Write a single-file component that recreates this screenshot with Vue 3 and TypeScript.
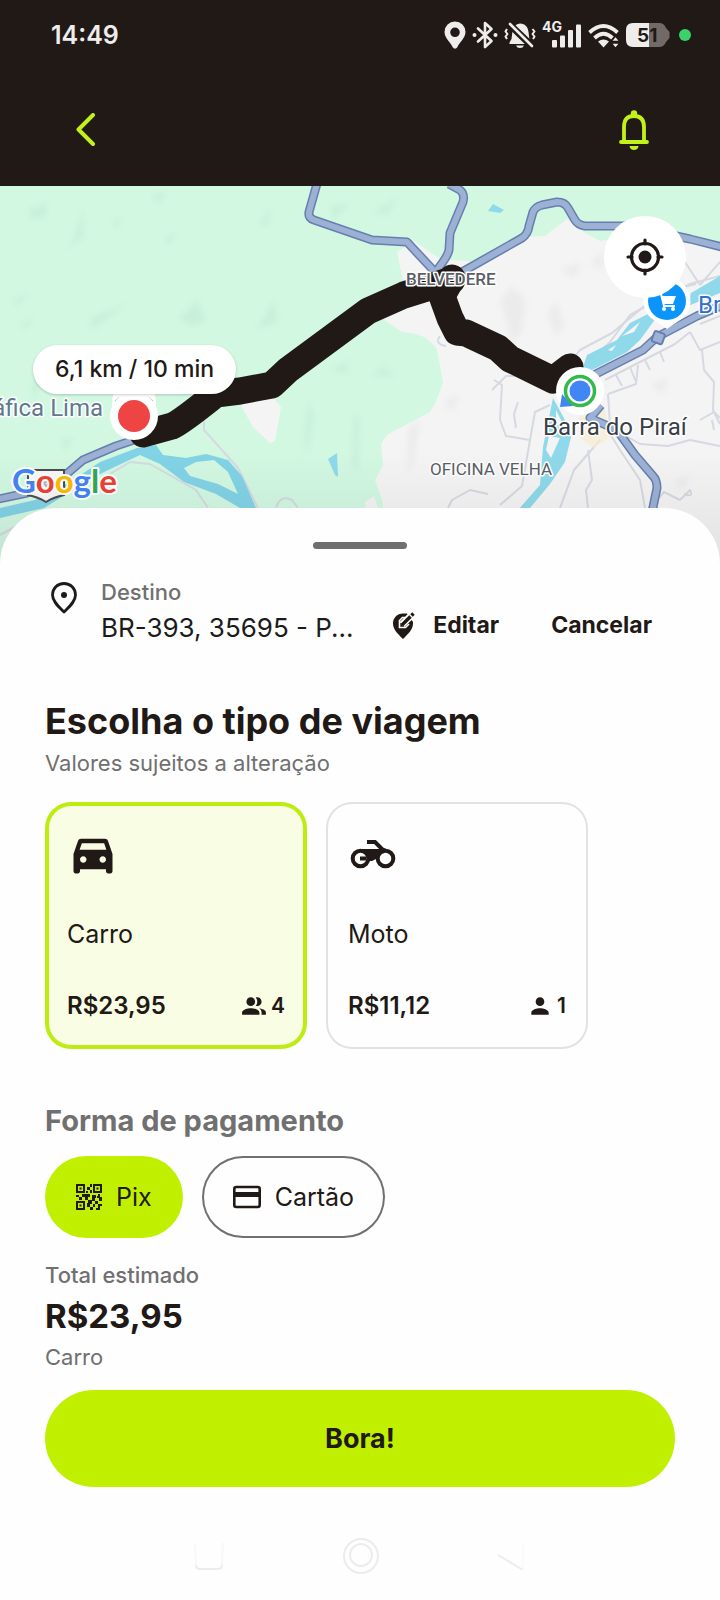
<script setup lang="ts">
import { computed, ref } from 'vue'

interface Ride {
  id: string
  name: string
  price: string
  seats: number
}

const rides: Ride[] = [
  { id: 'carro', name: 'Carro', price: 'R$23,95', seats: 4 },
  { id: 'moto', name: 'Moto', price: 'R$11,12', seats: 1 },
]
const rideId = ref('carro')
const payment = ref('pix')
const selected = computed(() => rides.find((r) => r.id === rideId.value) ?? rides[0])

const majorRoads = [
  'M318 180L309 212Q308 218 314 220L372 240L407 242L435 272',
  'M449 184L460 190Q465 194 463 202L450 233L449 250Q448 256 437 270',
  'M462 272L522 238Q528 234 529 226L533 212Q535 207 542 205L557 202Q565 202 568 208L575 220Q578 225 585 226L630 226L690 239L730 249',
  'M590 377L643 350L657 337L697 316L730 302',
  'M601 405L590 418L617 430L635 455L653 476Q657 480 657 488L652 512L650 570',
  'M140 438L116 446L83 460L63 477L27 493L-6 500',
]

const minorRoads = [
  'M590 360L610 342L630 315L650 304L690 284L720 276',
  'M560 375L580 350L612 333L648 303',
  'M685 262L700 285M700 285L720 262M680 288L696 284',
  'M700 324L720 316M690 332L700 350L720 342M702 350L704 370L714 382L713 410L720 424',
  'M605 380L640 362L675 344L690 332M616 375L622 386M630 367L636 382M645 360L650 370M660 352L664 362',
  'M608 394L636 384L638 365M608 394L610 424L626 436L640 444L668 446L690 440L720 446',
  'M550 405L535 412L530 440L522 486L500 505M530 440L506 436L500 420L502 385L494 380',
  'M518 402L514 414L516 428M492 390L506 376L524 376L540 384',
  'M604 424L620 450L640 480L645 508M600 440L574 470L560 508',
  'M588 450L592 480L586 490L588 508M650 508L664 492L680 500M680 500L690 490Q694 498 684 494',
  'M448 508L452 500L470 490L488 494M440 336Q434 344 446 346',
  'M204 410L204 430L238 468L258 508M276 508Q280 494 292 500L298 508M100 480L130 462L150 464L196 490L208 508M0 535L20 524',
  'M700 420L714 412L720 418M712 420L714 430',
]

const relief = [
  'M28 210L48 202L46 216L32 220Z', 'M84 206L74 238L66 252L84 236Z', 'M152 196L166 190L160 206Z',
  'M112 222L122 216L118 230Z', 'M164 238L178 232L168 246Z', 'M12 300L30 292L18 306Z',
  'M90 318L130 302L116 312L92 330Z', 'M178 318L198 300L206 322L190 326Z', 'M20 325L34 316L26 330Z',
  'M258 225L272 206L268 226Z', 'M256 330L274 300L278 322Z', 'M330 206L350 204L334 220Z',
  'M372 214L398 196L388 214Z', 'M308 400L314 414L308 456L304 440Z', 'M354 412L360 420L358 472L352 466Z',
  'M330 370L350 360L346 374Z', 'M370 376L384 366L396 376Z', 'M60 440L74 436L66 452Z', 'M30 386L40 380L36 400Z',
]
const greyRelief = [
  'M500 300L512 286L526 300L522 330L512 344L506 320Z', 'M548 314L556 300L564 326L556 338Z',
  'M408 430L420 420L414 460L408 476Z', 'M444 402L460 394L452 412Z', 'M560 270L582 262L574 278Z',
  'M650 386L668 376L664 394Z', 'M672 484L690 474L684 488Z', 'M590 262L606 250L602 270Z',
]
</script>

<template>
  <main class="screen">
    <header class="top">
      <div class="status">
        <time class="clock">14:49</time>
        <div class="status-icons">
          <svg width="22" height="28" viewBox="0 0 22 28">
            <path fill="#efedec" fill-rule="evenodd" d="M11 0.500a10.500 10.500 0 0 1 10.500 10.500C21.500 17.500 14.500 22 13.500 26Q11 29.500 8.500 26C7.500 22 .5 17.500 .5 11A10.500 10.500 0 0 1 11 0.500zM11 6.500a4.800 4.800 0 1 0 0 9.600a4.800 4.800 0 0 0 0-9.600z" />
          </svg>
          <svg width="26" height="28" viewBox="0 0 26 28">
            <path fill="none" stroke="#efedec" stroke-width="2.600" stroke-linejoin="round" stroke-linecap="round" d="M6 7.500L19.500 20L13 26V2L19.500 8L6 20.500" />
            <circle cx="2.500" cy="14" r="2" fill="#efedec" /><circle cx="23.500" cy="14" r="2" fill="#efedec" />
          </svg>
          <svg width="32" height="28" viewBox="0 0 32 28">
            <path fill="#efedec" d="M16 2.500C21 2.500 24 6 24.500 11L25.500 19L27 21.500V23H5.500V21.500L7.500 18L8.500 10Q9.500 3.500 16 2.500zM12 24.500h8q-1 2.500-4 2.500t-4-2.500z" />
            <path stroke="#211915" stroke-width="7" d="M3 1L29 26" />
            <path stroke="#efedec" stroke-width="2.600" stroke-linecap="round" d="M6 3L28 25" />
            <path fill="none" stroke="#efedec" stroke-width="2" stroke-linejoin="round" d="M3 8L1.500 10.500L3.500 13L1.500 15.500L3 18M28.500 8L30.500 10.500L28.500 13L30.500 15.500L29 18" />
          </svg>
          <svg width="40" height="36" viewBox="0 -4 40 36">
            <text x="0" y="11" font-family="Inter, sans-serif" font-size="14" font-weight="700" fill="#efedec">4G</text>
            <g fill="#efedec"><rect x="10" y="19" width="5" height="7.500" rx="1" /><rect x="18" y="14.500" width="5" height="12" rx="1" /><rect x="26" y="9" width="5" height="17.500" rx="1" /><rect x="34" y="3.500" width="5" height="23" rx="1" /></g>
          </svg>
          <svg width="32" height="28" viewBox="0 0 32 28">
            <g fill="none" stroke="#efedec" stroke-width="3.800"><path d="M1.500 11.500Q15.500-1.500 29.500 11.500" /><path d="M6.500 17Q15.500 8.500 24.500 17" /></g>
            <path fill="#efedec" d="M10 20.500q5.500-4 11 0l-5.500 6z" />
            <path fill="#efedec" stroke="#211915" stroke-width="1.500" d="M23 20.500l4.500-5.500 4.500 5.500zM23 22l4.500 5.500 4.500-5.500z" />
          </svg>
          <svg width="44" height="24" viewBox="0 0 44 24">
            <path fill="#716a67" d="M7 0H33Q38 0 40 5L43.500 9V15L40 19Q38 24 33 24H7z" />
            <path fill="#efedec" d="M7 0H23V24H7Q0 24 0 17V7Q0 0 7 0z" />
            <text x="11" y="19" font-family="Inter, sans-serif" font-size="19" font-weight="700" fill="#211915">51</text>
          </svg>
          <i class="dot"></i>
        </div>
      </div>
      <nav class="bar">
        <button class="icon-btn" aria-label="Voltar">
          <svg width="20" height="34" viewBox="0 0 20 34"><path fill="none" stroke="#c2f11a" stroke-width="4" stroke-linecap="round" stroke-linejoin="round" d="M17 2L2.500 16.500L17 31" /></svg>
        </button>
        <button class="icon-btn" aria-label="Notificações">
          <svg width="32" height="40" viewBox="0 0 32 40">
            <path fill="none" stroke="#c2f11a" stroke-width="3.800" stroke-linecap="round" stroke-linejoin="round" d="M3 32H29M6 32V17Q6 6 16 6T26 17V32" />
            <path fill="#c2f11a" d="M12.800 6V3.500a3.200 3.200 0 0 1 6.400 0V6zM11.500 36h9q-.5 4-4.500 4t-4.500-4z" />
          </svg>
        </button>
      </nav>
    </header>

    <section class="map" aria-label="Mapa do trajeto">
      <svg class="map-art" viewBox="0 186 720 384">
        <defs>
          <linearGradient id="shade" x1="0" y1="0" x2="0" y2="1"><stop offset="0" stop-color="#000" stop-opacity="0" /><stop offset="1" stop-color="#000" stop-opacity=".08" /></linearGradient>
          <filter id="soft" x="-30%" y="-30%" width="160%" height="160%"><feGaussianBlur stdDeviation="3" /></filter>
        </defs>
        <rect y="185" width="720" height="385" fill="#d2f8e2" />
        <g fill="#c8f0d9" filter="url(#soft)"><path v-for="d in relief" :key="d" :d="d" /></g>
        <path fill="#f4f4f4" d="M397 252L414 241L440 259L480 262L526 237L545 236L567 219L585 233L600 241L630 236L690 240L720 248V570H392L382 500L375 480L383 465L381 445Q384 434 400 428L430 412Q436 404 443 382L437 350Q430 338 416 334L402 332L382 318L404 285Z" />
        <path fill="#f4f4f4" d="M240 404L273 398L281 407L275 441L270 443L253 427ZM365 502L374 496L378 508H366Z" />
        <g fill="#ebebec" filter="url(#soft)"><path v-for="d in greyRelief" :key="d" :d="d" /></g>
        <g fill="none" stroke="#d6d9e1" stroke-width="2" stroke-linejoin="round"><path v-for="d in minorRoads" :key="d" :d="d" /></g>
        <g fill="#8fd9ea">
          <path d="M328 459L337 453L338 477L335 475ZM488 211L493 204L504 210L500 213Z" />
          <path d="M691 293L720 276V293L688 306ZM652 312L630 323L617 340L587 355L580 376L600 366L627 352L640 340L656 318Z" />
          <path d="M553 398L572 433L565 462L550 484L530 508L518 510L540 485L543 447Z" />
        </g>
        <path fill="#f4f4f4" d="M622 336L640 322L634 332ZM608 350L616 345L612 351ZM549 436L560 438L551 458L546 450ZM556 410L562 422L556 426Z" />
        <path fill="#82d3e6" d="M0 508L35 500L70 482L100 462L137 448L156 445L163 455L186 458L206 454L228 460L242 476L256 508H240L216 494L184 482L160 464L140 455L104 472L70 492L44 508L0 518Z" />
        <path fill="#d2f8e2" d="M184 468L196 462L214 460L228 472L238 494L218 484L190 476Z" />
        <path fill="#f6ecd2" opacity=".7" d="M578 418L604 408L612 436L594 448L582 440Z" />
        <g fill="none" stroke="#667fae" stroke-width="9" stroke-linejoin="round"><path v-for="d in majorRoads" :key="d" :d="d" /></g>
        <g fill="none" stroke="#9db1d5" stroke-width="6" stroke-linejoin="round"><path v-for="d in majorRoads" :key="d" :d="d" /></g>
        <rect x="653" y="332" width="11" height="11" rx="2" fill="#9db1d5" stroke="#667fae" stroke-width="2" transform="rotate(20 658 337)" />

        <g fill="none" stroke="#211915" stroke-width="27" stroke-linejoin="round" stroke-linecap="round">
          <path d="M143 434L172 426Q180 423 216 394L240 391L272 385L288 370L368 311L404 295L452 280" />
          <path d="M452 278L442 296L450 318L457 332L466 333L498 348L510 359L553 380L570 367" />
        </g>

        <path fill="#f7f7f7" stroke="#4d4d4d" stroke-width="2" d="M28 470H64V495Q54 497 46 502Q38 497 28 495Z" />
        <path fill="none" stroke="#b5b5b5" stroke-width="2" d="M30 482H62M42 480L46 486L52 480" />

        <circle cx="134" cy="402" r="22" fill="#fff" /><path fill="none" stroke="#7287a0" stroke-width="3" d="M116 402Q122 395 134 395T152 402" />
        <circle cx="134" cy="416" r="24" fill="#fff" /><circle cx="134" cy="416" r="16" fill="#ef4444" />

        <path fill="#fff" d="M667 278A23 23 0 0 1 683 318Q674 324 667 329Q660 324 651 318A23 23 0 0 1 667 278Z" />
        <circle cx="667" cy="301" r="19" fill="#0b95fb" />
        <path fill="none" stroke="#fff" stroke-width="2" d="M657 294H661L664 306H675" /><path fill="#fff" d="M661 296H676L673 304H664Z" /><circle cx="664" cy="309" r="2" fill="#fff" /><circle cx="673" cy="309" r="2" fill="#fff" />

        <circle cx="580" cy="391" r="24" fill="#fff" /><path fill="#4285f4" d="M562 394L560 407L573 406Z" />
        <circle cx="580" cy="391" r="14.500" fill="#fff" stroke="#34b94d" stroke-width="3.500" /><circle cx="580" cy="391" r="10.500" fill="#4285f4" />

        <g class="labels">
          <text x="406" y="285" font-size="17" font-weight="500" fill="#5a5e66">BELVEDERE</text>
          <text x="430" y="475" font-size="17" fill="#5a5e66">OFICINA VELHA</text>
          <text x="543" y="435" font-size="24" fill="#3b3f45">Barra do Piraí</text>
          <text x="103" y="416" font-size="24" text-anchor="end" fill="#62788f">áfica Lima</text>
          <text x="698" y="313" font-size="24" fill="#2f6fd0">Br</text>
          <text class="google" x="12" y="493" font-size="33"><tspan fill="#4285f4">G</tspan><tspan fill="#ea4335">o</tspan><tspan fill="#fbbc05">o</tspan><tspan fill="#4285f4">g</tspan><tspan fill="#34a853">l</tspan><tspan fill="#ea4335">e</tspan></text>
        </g>
        <rect y="450" width="720" height="120" fill="url(#shade)" />
      </svg>
      <output class="eta">6,1 km / 10 min</output>
      <button class="locate" aria-label="Minha localização">
        <svg width="38" height="38" viewBox="0 0 38 38" fill="none" stroke="#211915">
          <circle cx="19" cy="19" r="13.500" stroke-width="3.200" /><circle cx="19" cy="19" r="6.500" fill="#211915" stroke="none" />
          <path stroke-width="3.200" stroke-linecap="round" d="M19 2V6M19 32V36M2 19H6M32 19H36" />
        </svg>
      </button>
    </section>

    <section class="sheet">
      <div class="handle"></div>
      <div class="dest">
        <svg class="pin" width="26" height="32" viewBox="0 0 26 32">
          <path fill="none" stroke="#1b1b1b" stroke-width="2.800" stroke-linejoin="round" d="M13 1.500C19.500 1.500 24.500 6.500 24.500 13C24.500 19.500 18 25 13 30C8 25 1.500 19.500 1.500 13C1.500 6.500 6.500 1.500 13 1.500Z" /><circle cx="13" cy="13" r="3" fill="#1b1b1b" />
        </svg>
        <div class="place">
          <p class="caption strong">Destino</p>
          <p class="address">BR-393, 35695 - P...</p>
        </div>
        <button class="text-btn">
          <svg width="22" height="27" viewBox="0 0 22 27">
            <path fill="#211915" d="M10 1.500C4 1.500 0 6 0 11.500C0 17.500 5 22 10 27C15 22 20 17.500 20 11.500V10L14 1.500Z" />
            <path stroke="#fff" stroke-width="7" d="M9 12.500L22 0" /><path fill="none" stroke="#fff" stroke-width="1.600" d="M13 5.500H9.500L6.500 8.500V15.500H12.500L16 12" />
            <path stroke="#211915" stroke-width="3.500" d="M9 13L17.500 4.500M18.500 3.500L20.500 1.500" />
          </svg>
          Editar
        </button>
        <button class="text-btn cancel">Cancelar</button>
      </div>

      <h1>Escolha o tipo de viagem</h1>
      <p class="caption note">Valores sujeitos a alteração</p>

      <div class="rides" role="radiogroup" aria-label="Tipo de viagem">
        <label v-for="r in rides" :key="r.id" class="ride" :class="{ on: rideId === r.id }">
          <input v-model="rideId" class="hidden" type="radio" name="ride" :value="r.id" />
          <svg v-if="r.id === 'carro'" width="52" height="52" viewBox="0 0 24 24"><path fill="#211915" d="M18.920 6.010C18.720 5.420 18.160 5 17.500 5h-11c-.66 0-1.210.42-1.420 1.010L3 12v8c0 .55.45 1 1 1h1c.55 0 1-.45 1-1v-1h12v1c0 .55.45 1 1 1h1c.55 0 1-.45 1-1v-8l-2.080-5.990zM7.500 16c-.83 0-1.500-.67-1.500-1.500S6.670 13 7.500 13s1.500.67 1.500 1.500S8.330 16 7.500 16zm9 0c-.83 0-1.500-.67-1.500-1.500s.67-1.500 1.500-1.500 1.500.67 1.500 1.500-.67 1.500-1.500 1.500zM5.810 10l1.040-3h10.290l1.040 3H5.810z" /></svg>
          <svg v-else width="52" height="52" viewBox="0 0 52 52">
            <g fill="none" stroke="#211915" stroke-width="4"><circle cx="12.500" cy="30.500" r="7.800" /><circle cx="37.500" cy="30.500" r="7.800" /><path d="M19 14H27L37 24M12 30.500H18" /></g>
            <path fill="#211915" d="M12 21H31L38 20L30 27L28 31L24 33H19Q20 25 12 23Z" />
          </svg>
          <span class="ride-name">{{ r.name }}</span>
          <span class="ride-foot">
            <strong>{{ r.price }}</strong>
            <span class="seats">
              <svg v-if="r.seats > 1" width="26" height="26" viewBox="0 0 24 24" fill="#211915"><circle cx="9" cy="8" r="4" /><path d="M9 14c-2.670 0-8 1.340-8 4v2h16v-2c0-2.660-5.330-4-8-4zM16.670 14.130C18.040 15.060 19 16.320 19 18v2h4v-2c0-2.180-3.570-3.470-6.330-3.870zM15 12c2.210 0 4-1.790 4-4s-1.790-4-4-4c-.47 0-.91.1-1.330.24C14.500 5.270 15 6.580 15 8s-.5 2.730-1.330 3.760c.42.14.86.24 1.330.24z" /></svg>
              <svg v-else width="26" height="26" viewBox="0 0 24 24" fill="#211915"><path d="M12 12c2.210 0 4-1.790 4-4s-1.790-4-4-4-4 1.790-4 4 1.790 4 4 4zm0 2c-2.670 0-8 1.340-8 4v2h16v-2c0-2.660-5.330-4-8-4z" /></svg>
              {{ r.seats }}
            </span>
          </span>
        </label>
      </div>

      <h2>Forma de pagamento</h2>
      <div class="pays" role="radiogroup" aria-label="Forma de pagamento">
        <label class="pay" :class="{ on: payment === 'pix' }">
          <input v-model="payment" class="hidden" type="radio" name="pay" value="pix" />
          <svg width="26" height="26" viewBox="0 0 26 26">
            <g fill="none" stroke="#211915" stroke-width="2"><rect x="1" y="1" width="7" height="7" /><rect x="18" y="1" width="7" height="7" /><rect x="1" y="18" width="7" height="7" /></g>
            <path fill="#211915" d="M3.500 3.500h2v2h-2zM20.500 3.500h2v2h-2zM3.500 20.500h2v2h-2zM14 0h2v3h-2zM11 3h3v3h-3zM14 6h2v3h-2zM10 7h2v2h-2zM0 11h3v2H0zM3 13h3v3H3zM6 10h8v3h-2v3H9v-3H6zM16 11h4v3h-4zM22 10h2v3h2v4h-3v-3h-2v-2h1zM12 16h4v-2h3v3h-3v3h-4zM19 17h3v3h-3zM11 19h3v4h-3zM17 20h2v3h-2zM22 20h4v2h-2v4h-4v-2h2zM14 23h3v3h-3z" />
          </svg>
          Pix
        </label>
        <label class="pay" :class="{ on: payment === 'cartao' }">
          <input v-model="payment" class="hidden" type="radio" name="pay" value="cartao" />
          <svg width="28" height="24" viewBox="0 0 28 24"><rect x="1.300" y="2" width="25.400" height="20" rx="2" fill="none" stroke="#211915" stroke-width="2.600" /><path fill="#211915" d="M1 7h26v5H1z" /></svg>
          Cartão
        </label>
      </div>

      <p class="caption strong total-label">Total estimado</p>
      <p class="total">{{ selected.price }}</p>
      <p class="caption">{{ selected.name }}</p>
      <button class="go">Bora!</button>

      <div class="sysnav" aria-hidden="true">
        <svg width="34" height="38" viewBox="0 0 34 38" fill="none" stroke="#ececec" stroke-width="2"><path stroke="#f8f8f8" d="M3 6L4 29M31 6L30 29" /><path d="M4 28Q4 32 8 32H26Q30 32 30 28" /></svg>
        <svg width="38" height="38" viewBox="0 0 38 38" fill="none" stroke="#ececec" stroke-width="2"><circle cx="19" cy="19" r="17" /><circle cx="19" cy="18" r="11" /></svg>
        <svg width="30" height="38" viewBox="0 0 30 38" fill="none" stroke="#ececec" stroke-width="2"><path d="M2 18L27 33" /><path stroke="#fafafa" d="M27 6V33" /></svg>
      </div>
    </section>
  </main>
</template>

<style>
body { margin: 0; background: #fefefe; }
</style>

<style scoped>
.screen { font-family: Inter, "Open Sans", sans-serif; color: #211915; background: #fefefe; }
.screen * { box-sizing: border-box; }
p, h1, h2 { margin: 0; }
button { border: 0; background: none; padding: 0; font: inherit; color: inherit; cursor: pointer; }
svg { display: block; flex: none; }
.hidden { position: absolute; opacity: 0; width: 1px; height: 1px; margin: 0; }

.top { background: #211915; padding-bottom: 36px; }
.status { display: flex; justify-content: space-between; align-items: center; height: 70px; padding: 0 29px 0 51px; }
.clock { font-size: 25px; font-weight: 600; color: #efedec; }
.status-icons { display: flex; align-items: center; gap: 6px; }
.dot { width: 12px; height: 12px; margin-left: 3px; border-radius: 50%; background: #3bd16b; }
.bar { display: flex; justify-content: space-between; align-items: center; height: 80px; padding: 40px 70px 0 76px; }

.map { position: relative; }
.map-art { width: 100%; height: auto; }
.labels text { font-family: Roboto, sans-serif; paint-order: stroke; stroke: #fff; stroke-width: 3px; stroke-linejoin: round; }
.labels .google { font-family: Lato, sans-serif; font-weight: 700; stroke-width: 4px; }
.eta { position: absolute; left: 33px; top: 159px; padding: 0 22px; border-radius: 25px; background: #fff; font-size: 23px; font-weight: 500; line-height: 49px; box-shadow: 0 1px 3px rgba(0, 0, 0, .2); }
.locate { position: absolute; right: 34px; top: 30px; display: grid; place-items: center; width: 82px; height: 82px; border-radius: 50%; background: #fff; }

.sheet { position: relative; margin-top: -62px; padding: 34px 45px 20px; border-radius: 56px 56px 0 0; background: #fefefe; }
.handle { width: 94px; height: 7px; margin: 0 auto 28px; border-radius: 4px; background: #6f6f6f; }
.dest { display: flex; align-items: flex-end; padding: 0 23px 0 6px; }
.pin { align-self: flex-start; margin-top: 5px; }
.place { flex: 1; min-width: 0; padding-left: 24px; }
.caption { font-size: 22px; line-height: 30px; color: #707070; }
.strong { font-weight: 500; }
.address { overflow: hidden; font-size: 26px; line-height: 42px; color: #1b1b1b; white-space: nowrap; }
.text-btn { display: flex; align-items: center; gap: 18px; height: 48px; font-size: 23px; font-weight: 700; }
.cancel { margin-left: 52px; }

h1 { margin-top: 48px; font-size: 36px; font-weight: 700; line-height: 48px; }
.note { line-height: 36px; }
.rides { display: flex; gap: 19px; margin-top: 21px; }
.ride { position: relative; display: flex; flex-direction: column; width: 262px; padding: 26px 22px 24px; border-radius: 26px; box-shadow: inset 0 0 0 2px #e2e2e4; cursor: pointer; }
.ride.on { background: #f9fde4; box-shadow: inset 0 0 0 4px #bdec10; }
.ride-name { margin: 36px 0 35px; font-size: 25px; line-height: 36px; }
.ride-foot { display: flex; justify-content: space-between; align-items: center; font-size: 24px; line-height: 38px; }
.ride-foot strong { font-weight: 600; }
.seats { display: flex; align-items: center; gap: 4px; font-size: 21px; font-weight: 600; }

h2 { margin-top: 52px; font-size: 29px; font-weight: 700; line-height: 40px; color: #707070; }
.pays { display: flex; gap: 19px; margin-top: 15px; }
.pay { position: relative; display: flex; align-items: center; gap: 14px; height: 82px; padding: 0 31px; border-radius: 41px; box-shadow: inset 0 0 0 2px #707070; font-size: 25px; cursor: pointer; }
.pay.on { background: #c0f000; box-shadow: none; }
.total-label { margin-top: 22px; }
.total { font-size: 33px; font-weight: 700; line-height: 52px; }
.go { display: block; width: 100%; height: 97px; margin-top: 18px; border-radius: 49px; background: #c0f000; font-size: 27px; font-weight: 700; }
.sysnav { display: flex; justify-content: space-between; margin-top: 50px; padding: 0 149px 0 147px; }
</style>
